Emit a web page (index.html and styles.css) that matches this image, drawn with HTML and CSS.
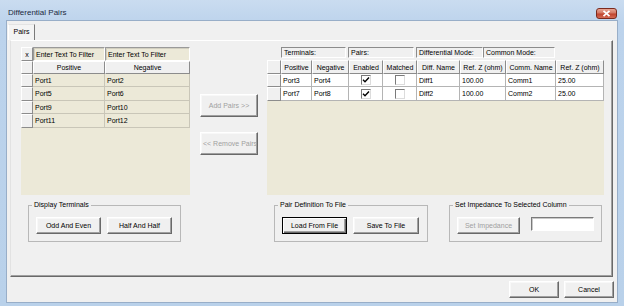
FILE: index.html
```html
<!DOCTYPE html>
<html lang="en">
<head>
    <meta charset="UTF-8">
    <title>Differential Pairs</title>
    <link rel="stylesheet" href="styles.css">
</head>
<body>
<div class="window">
    <div class="titlebar">
        <span class="title">Differential Pairs</span>
        <span class="close">
            <svg width="9" height="7" viewBox="0 0 9 7"><path d="M1.5 0.8 L7.5 6.2 M7.5 0.8 L1.5 6.2" stroke="#fff" stroke-width="1.8"/></svg>
        </span>
    </div>
    <div class="client">
        <div class="tabs"><span class="tab">Pairs</span></div>
        <div class="panel">
            <div class="top">
                <div class="lgrid">
                    <div class="c rh ctr">x</div>
                    <div class="c flt">Enter Text To Filter</div>
                    <div class="c flt">Enter Text To Filter</div>

                    <div class="c rh"></div>
                    <div class="c hd ctr">Positive</div>
                    <div class="c hd ctr">Negative</div>

                    <div class="c rh"></div><div class="c bc">Port1</div><div class="c bc">Port2</div>
                    <div class="c rh"></div><div class="c bc">Port5</div><div class="c bc">Port6</div>
                    <div class="c rh"></div><div class="c bc">Port9</div><div class="c bc">Port10</div>
                    <div class="c rh"></div><div class="c bc">Port11</div><div class="c bc">Port12</div>
                </div>

                <div class="mid">
                    <button class="btn dis">Add Pairs &gt;&gt;</button>
                    <button class="btn dis clip">&lt;&lt; Remove Pairs</button>
                </div>

                <div class="rgrid">
                    <div class="labels">
                        <div class="lbl lb-term">Terminals:</div>
                        <div class="lbl lb-pairs">Pairs:</div>
                        <div class="lbl lb-diff">Differential Mode:</div>
                        <div class="lbl lb-comm">Common Mode:</div>
                    </div>
                    <div class="rtable">
                        <div class="c rh"></div>
                        <div class="c hd ctr">Positive</div>
                        <div class="c hd ctr">Negative</div>
                        <div class="c hd ctr">Enabled</div>
                        <div class="c hd ctr">Matched</div>
                        <div class="c hd ctr">Diff. Name</div>
                        <div class="c hd ctr">Ref. Z (ohm)</div>
                        <div class="c hd ctr">Comm. Name</div>
                        <div class="c hd ctr">Ref. Z (ohm)</div>

                        <div class="c rh"></div>
                        <div class="c wc">Port3</div>
                        <div class="c wc">Port4</div>
                        <div class="c wc ctr"><span class="chk"><svg width="8" height="8" viewBox="0 0 8 8"><path d="M1 3.8 L3 5.8 L7 1.6" fill="none" stroke="#000" stroke-width="1.4"/></svg></span></div>
                        <div class="c wc ctr"><span class="chk"></span></div>
                        <div class="c wc">Diff1</div>
                        <div class="c wc">100.00</div>
                        <div class="c wc">Comm1</div>
                        <div class="c wc">25.00</div>

                        <div class="c rh"></div>
                        <div class="c wc">Port7</div>
                        <div class="c wc">Port8</div>
                        <div class="c wc ctr"><span class="chk"><svg width="8" height="8" viewBox="0 0 8 8"><path d="M1 3.8 L3 5.8 L7 1.6" fill="none" stroke="#000" stroke-width="1.4"/></svg></span></div>
                        <div class="c wc ctr"><span class="chk"></span></div>
                        <div class="c wc">Diff2</div>
                        <div class="c wc">100.00</div>
                        <div class="c wc">Comm2</div>
                        <div class="c wc">25.00</div>
                    </div>
                    <div class="rfill"></div>
                </div>
            </div>

            <div class="groups">
                <fieldset class="grp g1">
                    <legend>Display Terminals</legend>
                    <div class="grp-row">
                        <button class="btn w65">Odd And Even</button>
                        <button class="btn w65">Half And Half</button>
                    </div>
                </fieldset>
                <fieldset class="grp g2">
                    <legend>Pair Definition To File</legend>
                    <div class="grp-row">
                        <button class="btn def w65">Load From File</button>
                        <button class="btn w66">Save To File</button>
                    </div>
                </fieldset>
                <fieldset class="grp g3">
                    <legend>Set Impedance To Selected Column</legend>
                    <div class="grp-row wide">
                        <button class="btn dis w66">Set Impedance</button>
                        <input class="txt" type="text">
                    </div>
                </fieldset>
            </div>
        </div>

        <div class="footer">
            <button class="btn w50">OK</button>
            <button class="btn w50">Cancel</button>
        </div>
    </div>
</div>
</body>
</html>
```

FILE: styles.css
```css
* {
    box-sizing: border-box;
}
body {
    margin: 0;
    font-family: "Liberation Sans", Arial, sans-serif;
    font-size: 7px;
    color: #000;
}
.window {
    width: 624px;
    height: 306px;
    background: linear-gradient(#cadcf0, #bcd3ec 24px, #b9d1ea);
    display: flex;
    flex-direction: column;
}
.titlebar {
    height: 20px;
    padding: 7px 7px 0 8px;
    display: flex;
    justify-content: space-between;
}
.title {
    font-size: 8px;
    line-height: 11px;
    color: #1b2a3e;
}
.close {
    width: 21px;
    height: 11px;
    margin-top: 1px;
    border: 1px solid #7b2a1d;
    border-radius: 3px;
    background: linear-gradient(#e9a694, #d27662 45%, #c0432d 55%, #d46b55);
    display: flex;
    align-items: center;
    justify-content: center;
}
.client {
    flex: 1;
    margin: 0 6px 3px 6px;
    border: 1px solid #98aec8;
    background: #f0f0f0;
    display: flex;
    flex-direction: column;
}
.tabs {
    height: 19px;
    padding: 3px 0 0 1px;
    display: flex;
}
.tab {
    width: 27px;
    height: 16px;
    border-top: 1px solid #e3e3e3;
    border-left: 1px solid #fff;
    border-right: 1px solid #7a7a7a;
    background: #f4f4f4;
    text-align: center;
    line-height: 14px;
}
.panel {
    margin-left: 3px;
    width: 603px;
    height: 237px;
    border: 1px solid;
    border-color: #fff #696969 #696969 #e2e2e2;
    box-shadow: inset -1px -1px 0 #a0a0a0;
    padding: 6px 0 0 10px;
}
.top {
    display: flex;
    height: 148px;
}

/* grids */
.c {
    display: flex;
    align-items: center;
    padding-left: 2px;
    white-space: nowrap;
    overflow: hidden;
}
.ctr {
    justify-content: center;
    padding-left: 0;
}
.rh, .hd {
    background: #f0f0f0;
    border-style: solid;
    border-width: 1px;
    border-color: #fff #8c8c8c #8c8c8c #fff;
}
.lgrid {
    width: 169px;
    background: #ece9d8;
    display: grid;
    grid-template-columns: 12px 72px 85px;
    grid-template-rows: 14px 13px 13px 14px 13px 14px;
    align-content: start;
}
.flt {
    border: 1px solid;
    border-color: #9a9a9a #fff #fff #9a9a9a;
    box-shadow: inset 1px 1px 0 #d2cfc0;
}
.bc {
    border-right: 1px solid #c9c6b8;
    border-bottom: 1px solid #c9c6b8;
}
.mid {
    width: 77px;
    padding: 47px 0 0 10px;
    display: flex;
    flex-direction: column;
    gap: 15px;
}
.mid .btn {
    width: 58px;
    height: 23px;
}
.rgrid {
    width: 337px;
    display: flex;
    flex-direction: column;
}
.labels {
    height: 13px;
    padding-left: 14px;
    display: flex;
}
.lbl {
    height: 11px;
    line-height: 9px;
    padding-left: 2px;
    border: 1px solid;
    border-color: #8c8c8c #fff #fff #8c8c8c;
    white-space: nowrap;
    overflow: hidden;
}
.lb-term { width: 65px; }
.lb-pairs { width: 66px; margin-left: 2px; }
.lb-diff { width: 67px; margin-left: 2px; }
.lb-comm { width: 72px; }
.rtable {
    display: grid;
    grid-template-columns: 14px 31px 37px 34px 34px 43px 46px 50px 48px;
    grid-template-rows: 14px 13px 14px;
}
.wc {
    background: #fff;
    border-right: 1px solid #b4b4b4;
    border-bottom: 1px solid #b4b4b4;
}
.chk {
    width: 10px;
    height: 10px;
    background: #fff;
    border: 1px solid;
    border-color: #7a7a7a #dcdcdc #dcdcdc #7a7a7a;
    display: flex;
    align-items: center;
    justify-content: center;
}
.rfill {
    flex: 1;
    background: #ece9d8;
}

/* buttons */
.btn {
    font: inherit;
    color: #000;
    padding: 0;
    background: #f0f0f0;
    border: 1px solid;
    border-color: #fff #696969 #696969 #fff;
    box-shadow: inset -1px -1px 0 #a0a0a0, inset 1px 1px 0 #f8f8f8;
    height: 17px;
    display: flex;
    align-items: center;
    justify-content: center;
    white-space: nowrap;
    overflow: hidden;
}
.btn.dis {
    color: #a0a0a0;
}
.btn.clip {
    justify-content: flex-start;
    padding-left: 2px;
}
.btn.def {
    border-color: #000;
    box-shadow: inset 1px 1px 0 #fff, inset -1px -1px 0 #696969, inset -2px -2px 0 #a0a0a0;
}
.w50 { width: 50px; }
.w65 { width: 65px; }
.w66 { width: 66px; }

/* group boxes */
.groups {
    display: flex;
    margin-top: 5px;
}
.grp {
    margin: 0;
    min-width: 0;
    padding: 0 7px 7px 7px;
    border: 1px solid #b8b8b8;
}
.grp legend {
    padding: 0 2px;
    margin-left: -4px;
    line-height: 10px;
}
.g1 { width: 153px; margin-left: 7px; }
.g2 { width: 154px; margin-left: 93px; }
.g3 { width: 153px; margin-left: 21px; }
.grp-row {
    display: flex;
    gap: 6px;
    margin-top: 7px;
}
.grp-row.wide {
    gap: 11px;
}
.txt {
    width: 63px;
    height: 14px;
    border: 1px solid;
    border-color: #7a7a7a #fff #fff #7a7a7a;
    box-shadow: inset 1px 1px 0 #c8c8c8;
    background: #fff;
}
.footer {
    display: flex;
    justify-content: flex-end;
    gap: 5px;
    margin-top: 4px;
    padding-right: 3px;
}
```
